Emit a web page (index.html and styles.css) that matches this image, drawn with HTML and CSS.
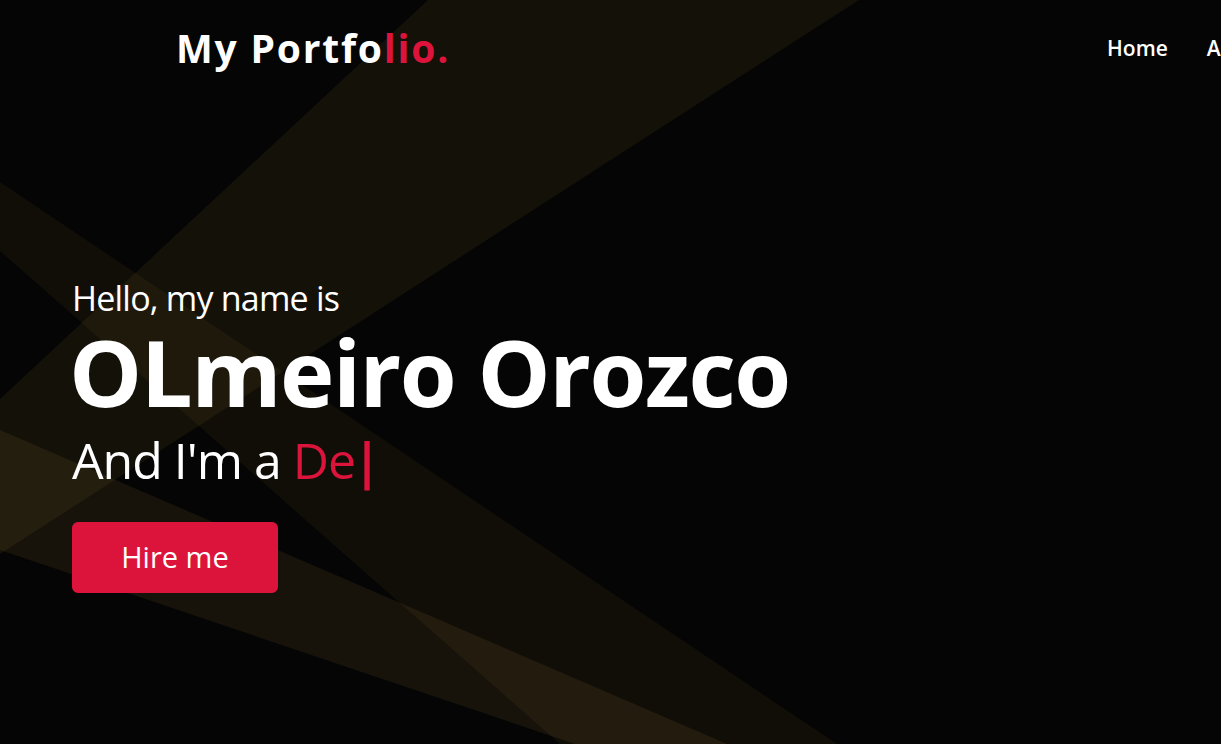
FILE: index.html
```html
<!DOCTYPE html>
<html lang="en">
<head>
<meta charset="utf-8">
<title>My Portfolio</title>
<link rel="stylesheet" href="styles.css">
</head>
<body>
<div class="page">
  <svg class="beams" viewBox="0 0 1221 744" preserveAspectRatio="none" aria-hidden="true">
    <polygon class="beam-a" points="428,0 859,0 0,554 0,399"/>
    <polygon class="beam-d" points="0,182 837,744 560,744 0,251"/>
    <polygon class="beam-c" points="0,430 727,744 575,744 0,550"/>
  </svg>
  <header class="navbar">
    <div class="nav-inner">
      <a class="logo" href="#">My Portfo<span>lio.</span></a>
      <ul class="menu">
        <li><a href="#">Home</a></li>
        <li><a href="#">About</a></li>
        <li><a href="#">Services</a></li>
        <li><a href="#">Skills</a></li>
        <li><a href="#">Teams</a></li>
        <li><a href="#">Contact</a></li>
      </ul>
    </div>
  </header>
  <section class="home">
    <div class="home-content">
      <div class="text-1">Hello, my name is</div>
      <div class="text-2">OLmeiro Orozco</div>
      <div class="text-3">And I'm a <span class="typing">De</span><span class="cursor">|</span></div>
      <a class="hire" href="#">Hire me</a>
    </div>
  </section>
</div>
</body>
</html>
```

FILE: styles.css
```css
* {
  margin: 0;
  padding: 0;
  box-sizing: border-box;
}

html, body {
  width: 100%;
  height: 100%;
}

body {
  background: #050505;
  font-family: "Open Sans", "Noto Sans", sans-serif;
  color: #fff;
  overflow: hidden;
}

.page {
  position: relative;
  width: 100%;
  height: 100%;
  overflow: hidden;
}

.beams {
  position: absolute;
  left: 0;
  top: 0;
  width: 100%;
  height: 100%;
  z-index: 0;
}

.beam-a { fill: rgba(190, 150, 60, 0.085); }
.beam-d { fill: rgba(190, 150, 60, 0.065); }
.beam-c { fill: rgba(190, 150, 70, 0.1); }

.navbar {
  position: relative;
  z-index: 1;
  padding-top: 25px;
}

.nav-inner {
  display: flex;
  align-items: center;
  padding-left: 176px;
  white-space: nowrap;
}

.logo {
  flex-shrink: 0;
  color: #fff;
  text-decoration: none;
  font-size: 39px;
  line-height: 1.2;
  font-weight: 700;
  letter-spacing: 1.8px;
}

.logo span {
  color: #dc143c;
}

.menu {
  display: flex;
  flex-shrink: 0;
  list-style: none;
  gap: 39px;
  margin-left: 657px;
}

.menu a {
  color: #fff;
  text-decoration: none;
  font-size: 21px;
  line-height: 1.2;
  font-weight: 600;
}

.home {
  position: relative;
  z-index: 1;
  padding: 206px 0 0 72px;
}

.text-1 {
  font-size: 34px;
  line-height: 40.8px;
  font-weight: 400;
  letter-spacing: -0.8px;
}

.text-2 {
  font-size: 92px;
  line-height: 1.15;
  font-weight: 700;
  letter-spacing: -1.5px;
  margin-left: -3px;
}

.text-3 {
  font-size: 50px;
  line-height: 60px;
  font-weight: 400;
  margin-top: 6px;
  letter-spacing: -1px;
}

.text-3 .typing {
  color: #dc143c;
  font-weight: 500;
}

.text-3 .cursor {
  color: #dc143c;
  font-weight: 700;
  margin-left: -2px;
}

.hire {
  display: inline-block;
  margin-top: 32px;
  width: 206px;
  text-align: center;
  background: #dc143c;
  border: 2px solid #dc143c;
  border-radius: 6px;
  color: #fff;
  text-decoration: none;
  font-size: 29px;
  line-height: 35px;
  padding: 15px 0 17px;
  font-weight: 400;
}
```
